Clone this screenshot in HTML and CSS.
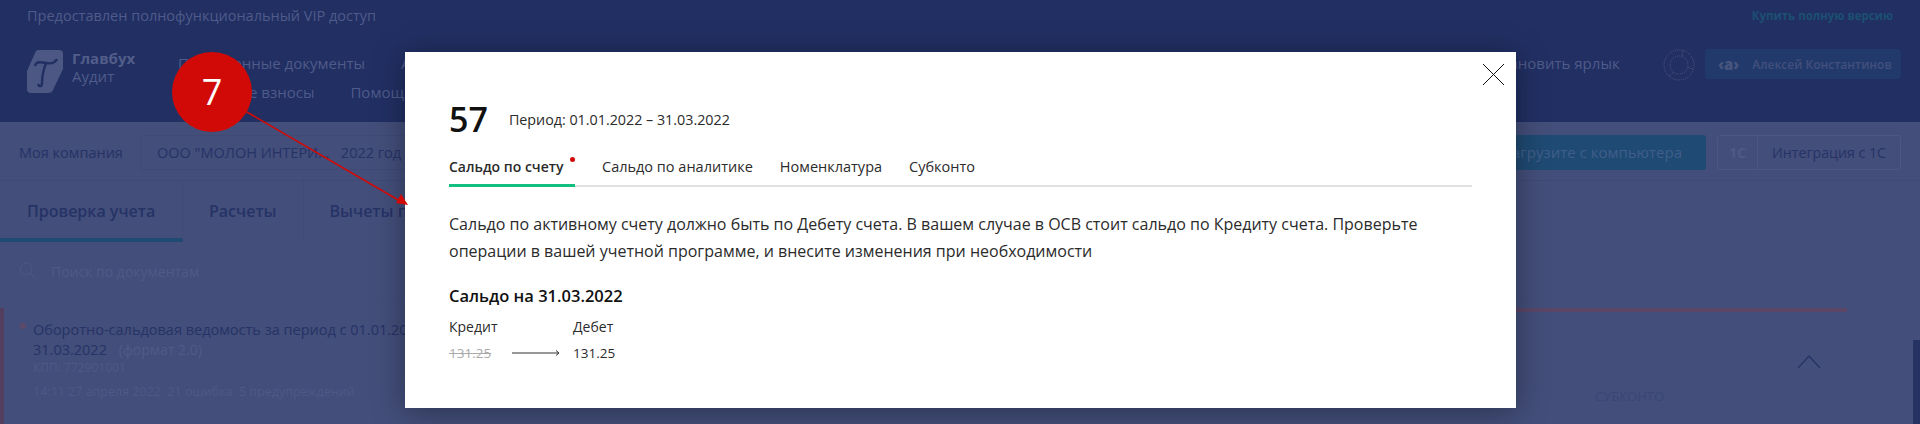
FILE: index.html
```html
<!DOCTYPE html>
<html lang="en">
<head>
    <meta charset="UTF-8">
    <title>Главбух Аудит</title>
    <link rel="stylesheet" href="styles.css">
</head>
<body>

    <!-- Dimmed page -->
    <div class="page">
        <div class="topbar">
            <span>Предоставлен полнофункциональный VIP доступ</span>
            <a class="buy-link" href="#">Купить полную версию</a>
        </div>

        <header class="header">
            <div class="logo">
                <svg class="logo-mark" viewBox="0 0 36 44" width="36" height="44">
                    <path d="M11 1H32Q36 1 36 5V20L26 41Q25 44 21 44H4Q0 44 0 40V22L8 4Q9 1 11 1Z" fill="#4c5783"/>
                    <path d="M8 17C9 12 14 13 19 14C24 15 28 14 30 10M19 14C16 22 15 30 15 34C15 38 12 38 11 35" fill="none" stroke="#212f63" stroke-width="2.4"/>
                </svg>
                <div class="logo-text">
                    <b>Главбух</b>
                    <span>Аудит</span>
                </div>
            </div>
            <nav class="nav">
                <div class="nav-row"><a href="#">Проверенные документы</a><a href="#">Аудит</a></div>
                <div class="nav-row nav-row-second"><a href="#">Страховые взносы</a><a href="#">Помощь</a></div>
            </nav>
            <div class="shortcut"><span class="shortcut-icon"></span><span>Установить ярлык</span></div>
            <svg class="ring" viewBox="0 0 32 32" width="32" height="32">
                <g fill="none" stroke="#4b567f" stroke-width="1" stroke-dasharray="1 1">
                    <circle cx="16" cy="16" r="15"/>
                    <circle cx="16" cy="16" r="9"/>
                    <path d="M20 2L19 8M30 20L24 18M6 27L11 23"/>
                </g>
            </svg>
            <div class="user-chip"><b class="user-mark">‹a›</b><span>Алексей Константинов</span></div>
        </header>

        <div class="company-bar">
            <span class="company-label">Моя компания</span>
            <div class="company-select">ООО "МОЛОН ИНТЕРИ...&nbsp;&nbsp; 2022 год</div>
            <button class="upload-btn">Загрузите с компьютера</button>
            <div class="integration"><b class="integration-mark">1C</b><span>Интеграция с 1С</span></div>
        </div>

        <div class="tabs">
            <div class="tab tab-active">Проверка учета</div>
            <div class="tab">Расчеты</div>
            <div class="tab">Вычеты по НДС</div>
        </div>

        <div class="search">
            <svg viewBox="0 0 18 18" width="18" height="18">
                <circle cx="7" cy="7" r="6" fill="none" stroke="#4d5883" stroke-width="1"/>
                <path d="M11.5 11.5L17 17" stroke="#4d5883" stroke-width="1"/>
            </svg>
            <span>Поиск по документам</span>
        </div>

        <div class="doc-row">
            <div class="doc-line"></div>
            <div class="doc-body">
                <span class="doc-dot"></span>
                <div class="doc-info">
                    <p class="doc-title">Оборотно-сальдовая ведомость за период с 01.01.2022 по<br>31.03.2022 <span class="doc-format">(формат 2.0)</span></p>
                    <p class="doc-kpp">КПП: 772901001</p>
                    <p class="doc-meta">14:11 27 апреля 2022 &nbsp;21 ошибка &nbsp;5 предупреждений</p>
                </div>
                <div class="doc-side">
                    <span class="doc-side-label">СУБКОНТО</span>
                    <svg class="chevron" viewBox="0 0 24 14" width="24" height="14">
                        <path d="M1 13L12 1L23 13" fill="none" stroke="#263366" stroke-width="1.3"/>
                    </svg>
                </div>
            </div>
        </div>
        <div class="scrollbar"></div>
    </div>

    <!-- Modal -->
    <div class="modal">
        <svg class="close" viewBox="0 0 23 23" width="23" height="23">
            <path d="M1 1L22 22M22 1L1 22" stroke="#111" stroke-width="1"/>
        </svg>
        <div class="modal-head">
            <span class="account">57</span>
            <span class="period">Период: 01.01.2022 – 31.03.2022</span>
        </div>
        <div class="modal-tabs">
            <div class="modal-tab modal-tab-active">Сальдо по счету<i class="red-dot"></i></div>
            <div class="modal-tab">Сальдо по аналитике</div>
            <div class="modal-tab">Номенклатура</div>
            <div class="modal-tab">Субконто</div>
        </div>
        <p class="modal-text">Сальдо по активному счету должно быть по Дебету счета. В вашем случае в ОСВ стоит сальдо по Кредиту счета. Проверьте операции в вашей учетной программе, и внесите изменения при необходимости</p>
        <h3 class="balance-title">Сальдо на 31.03.2022</h3>
        <div class="balance">
            <span class="balance-head">Кредит</span>
            <span></span>
            <span class="balance-head">Дебет</span>
            <span class="old-value">131.25</span>
            <svg viewBox="0 0 48 8" width="48" height="8">
                <path d="M0 4H47M44 1.5L47 4L44 6.5" fill="none" stroke="#333" stroke-width="1"/>
            </svg>
            <span>131.25</span>
        </div>
    </div>

    <!-- Callout -->
    <svg class="callout-arrow" viewBox="0 0 420 220" width="420" height="220">
        <path d="M240 108L400 201" stroke="#d20a07" stroke-width="1.6"/>
        <path d="M408 205L396 203L401 194Z" fill="#d20a07"/>
    </svg>
    <div class="callout">7</div>

</body>
</html>
```

FILE: styles.css
```css
* {
    margin: 0;
    padding: 0;
    box-sizing: border-box;
}

body {
    position: relative;
    width: 1920px;
    height: 424px;
    overflow: hidden;
    font-family: 'Open Sans', sans-serif;
    background: #434e7a;
    color: #263366;
}

.page {
    height: 424px;
    overflow: hidden;
}

/* Top of page */
.topbar {
    height: 36px;
    padding: 5px 27px 0;
    display: flex;
    justify-content: space-between;
    background: #212f63;
    color: #4f5b89;
    font-size: 14.5px;
    line-height: 22px;
}

.buy-link {
    color: #1c4f72;
    font-size: 11.5px;
    font-weight: 700;
    text-decoration: none;
}

.header {
    height: 86px;
    padding: 13px 19px 0 27px;
    display: flex;
    align-items: flex-start;
    background: #212f63;
    color: #4f5b89;
}

.logo {
    width: 151px;
    display: flex;
    gap: 9px;
}

.logo-text {
    display: flex;
    flex-direction: column;
    font-size: 15px;
    line-height: 18px;
}

.logo-text b {
    color: #525d8a;
}

.nav {
    width: 1276px;
    font-size: 15px;
    line-height: 29px;
}

.nav-row {
    display: flex;
    gap: 36px;
}

.nav a {
    color: #4f5b89;
    text-decoration: none;
}

.shortcut {
    width: 209px;
    display: flex;
    align-items: center;
    gap: 8px;
    font-size: 15px;
    line-height: 29px;
}

.shortcut-icon {
    width: 24px;
    height: 24px;
    border-radius: 6px;
    background: #3d4470;
}

.ring {
    flex: none;
    margin-right: 10px;
}

.user-chip {
    flex: none;
    width: 196px;
    height: 30px;
    padding-left: 13px;
    display: flex;
    align-items: center;
    gap: 13px;
    border-radius: 3px;
    background: #213a6b;
    color: #434f7d;
    font-size: 12px;
    font-weight: 600;
    white-space: nowrap;
}

.user-mark {
    color: #47557f;
    font-size: 15px;
}

/* Company selector */
.company-bar {
    height: 59px;
    padding: 13px 19px 0;
    display: flex;
    border-bottom: 1px solid #3f4a75;
    font-size: 14.5px;
    line-height: 35px;
}

.company-label {
    width: 121px;
}

.company-select {
    width: 1260px;
    height: 35px;
    padding-left: 16px;
    border: 1px solid #3f4a75;
    border-radius: 3px;
    line-height: 33px;
    white-space: nowrap;
}

.upload-btn {
    width: 306px;
    height: 35px;
    margin-right: 11px;
    padding-right: 24px;
    border: none;
    border-radius: 3px;
    background: #1f4a73;
    color: #3f5e8a;
    font: inherit;
    font-size: 15px;
    text-align: right;
}

.integration {
    width: 184px;
    height: 35px;
    display: flex;
    border: 1px solid #4d5782;
    border-radius: 3px;
    font-size: 14.2px;
    line-height: 33px;
}

.integration-mark {
    width: 40px;
    border-right: 1px solid #4d5782;
    color: #4f5a85;
    text-align: center;
}

.integration span {
    padding-left: 14px;
}

/* Tabs */
.tabs {
    height: 61px;
    display: flex;
    font-size: 16px;
    font-weight: 600;
    line-height: 60px;
    white-space: nowrap;
}

.tab {
    padding: 0 26px;
    border-right: 1px solid #3f4a75;
}

.tab-active {
    width: 183px;
    padding-left: 27px;
    border-bottom: 4px solid #1f4a73;
}

.search {
    height: 59px;
    padding: 20px 19px 0;
    display: flex;
    gap: 14px;
    border-bottom: 1px solid #414c78;
    color: #4f5a86;
    font-size: 14px;
    line-height: 20px;
}

/* Document row */
.doc-row {
    position: relative;
    height: 122px;
    margin-top: 2px;
    border-left: 4px solid #533e5e;
}

.doc-line {
    height: 4px;
    margin: 7px 73px 0 1400px;
    background: #5b4668;
}

.doc-body {
    padding-top: 8px;
    display: flex;
    font-size: 14.5px;
    line-height: 20px;
}

.doc-dot {
    width: 6px;
    height: 6px;
    margin: 3px 7px 0 16px;
    border-radius: 50%;
    background: #5d4a68;
}

.doc-info {
    width: 1562px;
    white-space: nowrap;
}

.doc-format {
    margin-left: 8px;
    color: #505b86;
    font-size: 14px;
}

.doc-kpp {
    color: #4e5985;
    font-size: 12px;
    line-height: 15px;
}

.doc-meta {
    margin-top: 7px;
    color: #4e5985;
    font-size: 12.5px;
}

.doc-side {
    position: relative;
    color: #3b4674;
    font-size: 13px;
}

.doc-side-label {
    display: block;
    margin-top: 66px;
    line-height: 20px;
}

.chevron {
    position: absolute;
    left: 202px;
    top: 35px;
}

.scrollbar {
    position: absolute;
    right: 0;
    top: 340px;
    width: 7px;
    height: 84px;
    background: #243264;
}

/* Modal window */
.modal {
    position: absolute;
    left: 405px;
    top: 52px;
    width: 1111px;
    height: 356px;
    padding: 45px 44px 0;
    background: #fff;
    box-shadow: 0 4px 30px rgba(0, 0, 0, 0.35);
    color: #2b2b2b;
}

.close {
    position: absolute;
    right: 11px;
    top: 11px;
}

.modal-head {
    display: flex;
    align-items: center;
    gap: 21px;
}

.account {
    color: #111;
    font-size: 34px;
    font-weight: 600;
    line-height: 44px;
}

.period {
    padding-top: 1px;
    font-size: 14.3px;
}

.modal-tabs {
    height: 39px;
    margin-top: 7px;
    display: flex;
    gap: 27px;
    border-bottom: 2px solid #e1e1e1;
    font-size: 14.5px;
    line-height: 38px;
}

.modal-tab {
    position: relative;
    height: 39px;
}

.modal-tab-active {
    width: 126px;
    border-bottom: 3px solid #13bf7f;
    font-size: 14px;
    font-weight: 600;
}

.red-dot {
    position: absolute;
    right: 0;
    top: 9px;
    width: 5px;
    height: 5px;
    border-radius: 50%;
    background: #d20a07;
}

.modal-text {
    margin-top: 24px;
    font-size: 16px;
    line-height: 27px;
}

.balance-title {
    margin-top: 19px;
    color: #111;
    font-size: 16.5px;
    font-weight: 600;
    line-height: 24px;
}

.balance {
    margin-top: 6px;
    display: grid;
    grid-template-columns: 63px 61px auto;
    align-items: center;
    justify-content: start;
    font-size: 13.5px;
    line-height: 26px;
}

.balance-head {
    font-size: 14px;
}

.old-value {
    color: #aaa;
    text-decoration: line-through;
}

/* Red callout */
.callout-arrow {
    position: absolute;
    left: 0;
    top: 0;
}

.callout {
    position: absolute;
    left: 172px;
    top: 52px;
    width: 80px;
    height: 80px;
    border-radius: 50%;
    background: #d20a07;
    color: #fff;
    font-size: 36px;
    line-height: 80px;
    text-align: center;
}
```
